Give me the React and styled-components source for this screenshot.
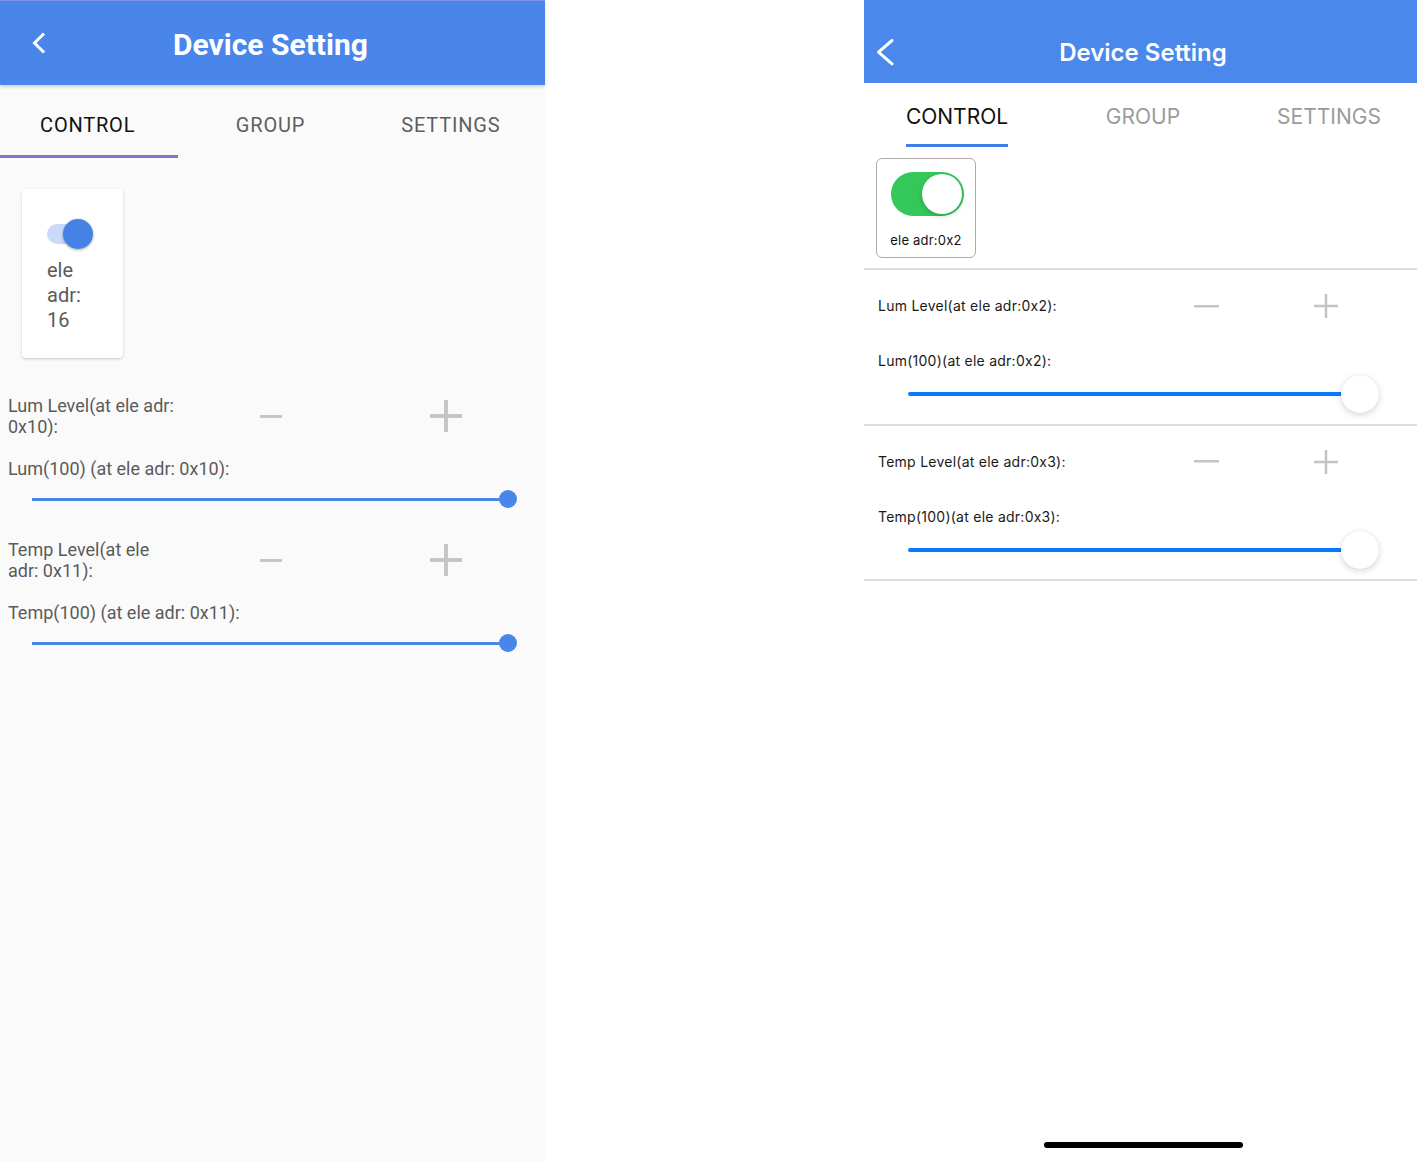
import React from "react";
import styled, { createGlobalStyle, css } from "styled-components";

const GlobalStyle = createGlobalStyle`
  html, body {
    margin: 0;
    padding: 0;
    background: #fff;
  }
  * {
    box-sizing: border-box;
  }
`;

const Screen = styled.div`
  display: flex;
  width: 1417px;
  height: 1161px;
  overflow: hidden;
  background: #fff;
`;

const Gap = styled.div`
  flex: 1;
`;

/* ---------- android ---------- */

const AndroidPanel = styled.div`
  width: 545px;
  height: 1161px;
  background: #fafafa;
  font-family: Roboto, "Noto Sans", sans-serif;
  display: flex;
  flex-direction: column;
`;

const AndroidBar = styled.header`
  position: relative;
  z-index: 1;
  height: 85px;
  border-top: 1px solid #8093e6;
  background: #4a86ea;
  box-shadow: 0 2px 3px rgba(0, 0, 0, 0.16);
  display: grid;
  grid-template-columns: 1fr auto 1fr;
  align-items: center;
  padding-top: 3px;
`;

const AndroidBack = styled.div`
  display: flex;
  padding-left: 28px;
  margin-top: -3px;
`;

const AndroidTitle = styled.h1`
  margin: 0 0 0 -4px;
  color: #fff;
  font-size: 30px;
  font-weight: 700;
`;

const AndroidTabs = styled.nav`
  display: grid;
  grid-template-columns: repeat(3, 1fr);
  height: 73px;
  padding-right: 4px;
`;

const AndroidTab = styled.div`
  position: relative;
  display: flex;
  align-items: center;
  justify-content: center;
  padding-top: 6px;
  font-size: 20px;
  letter-spacing: 0.8px;
  color: ${(p) => (p.$active ? "#111" : "#5e5e5e")};
  ${(p) =>
    p.$active &&
    css`
      padding-right: 5px;
      &::after {
        content: "";
        position: absolute;
        left: 0;
        right: 2px;
        bottom: 0;
        height: 3px;
        background: #8a72cf;
      }
    `}
`;

const AndroidBody = styled.div`
  padding: 31px 12px 0 8px;
`;

const AndroidCard = styled.div`
  width: 101px;
  margin-left: 14px;
  padding: 30px 25px 25px;
  background: #fff;
  border-radius: 4px;
  box-shadow: 0 1px 3px rgba(0, 0, 0, 0.2);
`;

const AndroidSwitch = styled.div`
  position: relative;
  width: 46px;
  height: 30px;
`;

const AndroidSwitchTrack = styled.div`
  position: absolute;
  left: 0;
  top: 5px;
  width: 40px;
  height: 20px;
  border-radius: 10px;
  background: #c9dbf8;
`;

const AndroidSwitchThumb = styled.div`
  position: absolute;
  right: 0;
  top: 0;
  width: 30px;
  height: 30px;
  border-radius: 50%;
  background: #4682e6;
  box-shadow: 0 1px 3px rgba(0, 0, 0, 0.35);
`;

const AndroidCardText = styled.div`
  margin-top: 9px;
  font-size: 20px;
  line-height: 25px;
  color: #5a5a5a;
`;

const AndroidLevelRow = styled.div`
  display: grid;
  grid-template-columns: repeat(3, 1fr);
  align-items: center;
  margin-top: ${(p) => p.$top}px;
`;

const AndroidText = styled.div`
  font-size: 18px;
  line-height: 21px;
  color: #5a5a5a;
`;

const IconCell = styled.div`
  display: flex;
  justify-content: center;
  align-items: center;
`;

const AndroidValue = styled(AndroidText)`
  margin-top: 21px;
`;

const AndroidSlider = styled.div`
  position: relative;
  height: 40px;
  margin: 0 16px 0 24px;
  display: flex;
  align-items: center;
`;

const AndroidTrack = styled.div`
  height: 3px;
  background: #4a86ea;
`;

const AndroidThumb = styled.div`
  position: absolute;
  top: 50%;
  margin: -9px 0 0 -9px;
  width: 18px;
  height: 18px;
  border-radius: 50%;
  background: #4a86ea;
`;

/* ---------- ios ---------- */

const IosPanel = styled.div`
  width: 553px;
  height: 1161px;
  background: #fff;
  font-family: Inter, "Liberation Sans", sans-serif;
  display: flex;
  flex-direction: column;
  overflow: hidden;
`;

const IosBar = styled.header`
  height: 83px;
  background: #4a88ec;
  display: grid;
  grid-template-columns: 1fr auto 1fr;
  align-items: center;
  padding: 21px 0 0 5px;
`;

const IosBack = styled.div`
  display: flex;
  padding-left: 6px;
`;

const IosTitle = styled.h1`
  margin: 0;
  color: #fff;
  font-size: 24px;
  font-weight: 600;
`;

const IosTabs = styled.nav`
  display: grid;
  grid-template-columns: repeat(3, 186px);
`;

const IosTab = styled.div`
  display: flex;
  justify-content: center;
  padding-top: 23px;
`;

const IosTabLabel = styled.span`
  display: inline-block;
  height: 41px;
  font-size: 21px;
  line-height: 22px;
  color: ${(p) => (p.$active ? "#111" : "#9b9b9b")};
  border-bottom: 3px solid ${(p) => (p.$active ? "#3d7ee9" : "transparent")};
`;

const IosCard = styled.div`
  width: 100px;
  height: 100px;
  margin: 11px 0 0 12px;
  padding-top: 13px;
  border: 1.5px solid #ababab;
  border-radius: 6px;
  display: flex;
  flex-direction: column;
  align-items: center;
`;

const IosSwitch = styled.div`
  position: relative;
  width: 73px;
  height: 44px;
  margin-left: 2px;
  border-radius: 22px;
  background: #34c759;
`;

const IosSwitchThumb = styled.div`
  position: absolute;
  right: 2px;
  top: 2px;
  width: 40px;
  height: 40px;
  border-radius: 50%;
  background: #fff;
  box-shadow: 0 2px 5px rgba(0, 0, 0, 0.18);
`;

const IosCardText = styled.div`
  margin-top: 16px;
  font-size: 13px;
  line-height: 16px;
  letter-spacing: 0.2px;
  color: #111;
`;

const IosDivider = styled.div`
  height: 2px;
  background: #dedede;
  margin-top: ${(p) => p.$top || 0}px;
`;

const IosSection = styled.section`
  padding: 21px 31px 9.5px 14px;
`;

const IosLevelRow = styled.div`
  display: grid;
  grid-template-columns: 1fr 120px 120px;
  align-items: center;
  height: 30px;
`;

const IosText = styled.div`
  font-size: 14px;
  line-height: 20px;
  letter-spacing: 0.25px;
  color: #1a1a1a;
`;

const IosValue = styled(IosText)`
  margin-top: 30px;
`;

const IosSlider = styled.div`
  position: relative;
  height: 40px;
  margin: 3px 7px 0 30px;
  display: flex;
  align-items: center;
`;

const IosTrack = styled.div`
  height: 4px;
  border-radius: 2px;
  background: #0a7bff;
`;

const IosThumb = styled.div`
  position: absolute;
  top: 1px;
  width: 38px;
  height: 38px;
  margin-left: -38px;
  border-radius: 50%;
  background: #fff;
  box-shadow: 0 2px 7px rgba(0, 0, 0, 0.16), 0 0 1px rgba(0, 0, 0, 0.12);
`;

const HomeBar = styled.div`
  width: 199px;
  height: 6px;
  margin: auto 0 13px 180px;
  border-radius: 3px;
  background: #000;
`;

/* ---------- icons ---------- */

const Chevron = ({ width, height, d, weight, cap }) => (
  <svg width={width} height={height} viewBox={`0 0 ${width} ${height}`}>
    <path d={d} fill="none" stroke="#fff" strokeWidth={weight} strokeLinecap={cap} strokeLinejoin={cap === "round" ? "round" : "miter"} />
  </svg>
);

const Minus = ({ size, weight, color }) => (
  <svg width={size} height={weight + 2} viewBox={`0 0 ${size} ${weight + 2}`}>
    <path d={`M0 ${(weight + 2) / 2}H${size}`} stroke={color} strokeWidth={weight} />
  </svg>
);

const Plus = ({ size, weight, color }) => (
  <svg width={size} height={size} viewBox={`0 0 ${size} ${size}`}>
    <path d={`M${size / 2} 0V${size}M0 ${size / 2}H${size}`} stroke={color} strokeWidth={weight} />
  </svg>
);

/* ---------- data ---------- */

const androidLevels = [
  { level: "Lum Level(at ele adr: 0x10):", value: "Lum(100) (at ele adr: 0x10):", pct: 100 },
  { level: "Temp Level(at ele adr: 0x11):", value: "Temp(100) (at ele adr: 0x11):", pct: 100 },
];

const iosLevels = [
  { level: "Lum Level(at ele adr:0x2):", value: "Lum(100)(at ele adr:0x2):", pct: 100 },
  { level: "Temp Level(at ele adr:0x3):", value: "Temp(100)(at ele adr:0x3):", pct: 100 },
];

const tabs = ["CONTROL", "GROUP", "SETTINGS"];

const AndroidScreen = () => (
  <AndroidPanel>
    <AndroidBar>
      <AndroidBack>
        <Chevron width={20} height={24} d="M15 3.5L6.5 12L15 20.5" weight={3} cap="square" />
      </AndroidBack>
      <AndroidTitle>Device Setting</AndroidTitle>
      <div />
    </AndroidBar>
    <AndroidTabs>
      {tabs.map((t, i) => (
        <AndroidTab key={t} $active={i === 0}>
          {t}
        </AndroidTab>
      ))}
    </AndroidTabs>
    <AndroidBody>
      <AndroidCard>
        <AndroidSwitch>
          <AndroidSwitchTrack />
          <AndroidSwitchThumb />
        </AndroidSwitch>
        <AndroidCardText>ele adr: 16</AndroidCardText>
      </AndroidCard>
      {androidLevels.map((row, i) => (
        <React.Fragment key={row.level}>
          <AndroidLevelRow $top={i === 0 ? 37 : 20}>
            <AndroidText>{row.level}</AndroidText>
            <IconCell>
              <Minus size={22} weight={3} color="#c6c6c6" />
            </IconCell>
            <IconCell>
              <Plus size={32} weight={4} color="#c6c6c6" />
            </IconCell>
          </AndroidLevelRow>
          <AndroidValue>{row.value}</AndroidValue>
          <AndroidSlider>
            <AndroidTrack style={{ width: `calc(${row.pct}% - 9px)` }} />
            <AndroidThumb style={{ left: `calc(${row.pct}% - 9px)` }} />
          </AndroidSlider>
        </React.Fragment>
      ))}
    </AndroidBody>
  </AndroidPanel>
);

const IosScreen = () => (
  <IosPanel>
    <IosBar>
      <IosBack>
        <Chevron width={20} height={34} d="M17 5.5L3.5 17.2L17 28.8" weight={3} cap="round" />
      </IosBack>
      <IosTitle>Device Setting</IosTitle>
      <div />
    </IosBar>
    <IosTabs>
      {tabs.map((t, i) => (
        <IosTab key={t}>
          <IosTabLabel $active={i === 0}>{t}</IosTabLabel>
        </IosTab>
      ))}
    </IosTabs>
    <IosCard>
      <IosSwitch>
        <IosSwitchThumb />
      </IosSwitch>
      <IosCardText>ele adr:0x2</IosCardText>
    </IosCard>
    <IosDivider $top={10} />
    {iosLevels.map((row) => (
      <React.Fragment key={row.level}>
        <IosSection>
          <IosLevelRow>
            <IosText>{row.level}</IosText>
            <IconCell>
              <Minus size={25} weight={2.5} color="#c4c4c4" />
            </IconCell>
            <IconCell>
              <Plus size={24} weight={2.5} color="#c4c4c4" />
            </IconCell>
          </IosLevelRow>
          <IosValue>{row.value}</IosValue>
          <IosSlider>
            <IosTrack style={{ width: `calc(${row.pct}% - 19px)` }} />
            <IosThumb style={{ left: `${row.pct}%` }} />
          </IosSlider>
        </IosSection>
        <IosDivider />
      </React.Fragment>
    ))}
    <HomeBar />
  </IosPanel>
);

const App = () => (
  <>
    <GlobalStyle />
    <Screen>
      <AndroidScreen />
      <Gap />
      <IosScreen />
    </Screen>
  </>
);

export default App;
